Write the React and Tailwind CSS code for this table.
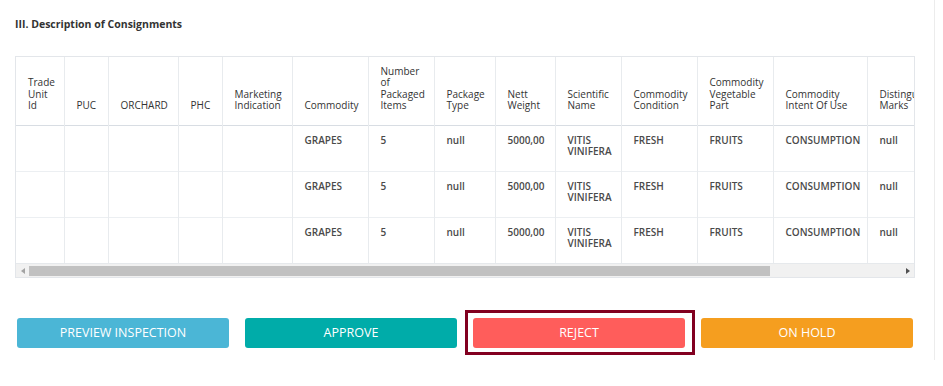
import React from 'react';

const columns = [
  { label: 'Trade Unit Id', w: 48, lines: ['Trade', 'Unit', 'Id'] },
  { label: 'PUC', w: 44 },
  { label: 'ORCHARD', w: 70 },
  { label: 'PHC', w: 44 },
  { label: 'Marketing Indication', w: 70, lines: ['Marketing', 'Indication'] },
  { label: 'Commodity', w: 76 },
  { label: 'Number of Packaged Items', w: 66, lines: ['Number', 'of', 'Packaged', 'Items'] },
  { label: 'Package Type', w: 61, lines: ['Package', 'Type'] },
  { label: 'Nett Weight', w: 60, lines: ['Nett', 'Weight'] },
  { label: 'Scientific Name', w: 66, lines: ['Scientific', 'Name'] },
  { label: 'Commodity Condition', w: 76, lines: ['Commodity', 'Condition'] },
  { label: 'Commodity Vegetable Part', w: 76, lines: ['Commodity', 'Vegetable', 'Part'] },
  { label: 'Commodity Intent Of Use', w: 94, lines: ['Commodity', 'Intent Of Use'] },
  { label: 'Distinguishing Marks', w: 110, lines: ['Distinguishing', 'Marks'] },
];

const row = ['', '', '', '', '', 'GRAPES', '5', 'null', '5000,00', ['VITIS', 'VINIFERA'], 'FRESH', 'FRUITS', 'CONSUMPTION', 'null'];
const rows = [row, row, row];

function Cell({ value }) {
  if (Array.isArray(value)) {
    return value.map((v, i) => <div key={i}>{v}</div>);
  }
  return value;
}

function ConsignmentTable() {
  return (
    <div className="w-[900px] border border-[#e3e6ea] bg-white">
      <div className="overflow-hidden">
        <table className="table-fixed border-collapse" style={{ width: columns.reduce((s, c) => s + c.w, 0) }}>
          <colgroup>
            {columns.map((c) => (
              <col key={c.label} style={{ width: c.w }} />
            ))}
          </colgroup>
          <thead>
            <tr className="h-[68px] border-b border-[#d8dde3]">
              {columns.map((c, i) => (
                <th
                  key={c.label}
                  className={`align-bottom text-left font-normal pl-[12px] pr-1 pb-[13px] whitespace-nowrap ${i > 0 ? 'border-l border-[#e8ebee]' : ''}`}
                >
                  {(c.lines || [c.label]).map((l, j) => (
                    <div key={j}>{l}</div>
                  ))}
                </th>
              ))}
            </tr>
          </thead>
          <tbody>
            {rows.map((r, ri) => (
              <tr key={ri} className={`h-[46px] ${ri < rows.length - 1 ? 'border-b border-[#eceff2]' : ''}`}>
                {r.map((v, ci) => (
                  <td
                    key={ci}
                    className={`align-top pl-[12px] pt-[9px] font-semibold text-[#4a4a4a] whitespace-nowrap ${ci > 0 ? 'border-l border-[#e8ebee]' : ''}`}
                  >
                    <Cell value={v} />
                  </td>
                ))}
              </tr>
            ))}
          </tbody>
        </table>
      </div>

      {/* horizontal scrollbar */}
      <div className="flex h-[14px] items-center border-t border-[#e6e9ec] bg-[#f1f1f1]">
        <div className="flex w-[13px] justify-center">
          <span className="h-0 w-0 border-y-[3px] border-r-[4px] border-y-transparent border-r-[#a3a3a3]" />
        </div>
        <div className="h-[10px] w-[741px] bg-[#c1c1c1]" />
        <div className="flex-1" />
        <div className="flex w-[13px] justify-center">
          <span className="h-0 w-0 border-y-[3px] border-l-[4px] border-y-transparent border-l-[#505050]" />
        </div>
      </div>
    </div>
  );
}

export default function App() {
  return (
    <div className="bg-white text-[#333] text-[10px] leading-[11.5px]" style={{ fontFamily: '"Open Sans", "Noto Sans", sans-serif' }}>
      <div className="h-[360px] w-[935px] border-r border-[#ececec] pl-[15px] pt-[17px]">
        <h2 className="text-[10.5px] font-bold leading-[14px] text-[#333]">III. Description of Consignments</h2>

        <div className="mt-[25px]">
          <ConsignmentTable />
        </div>

        {/* Action buttons */}
        <div className="mt-[40px] flex gap-[16px] pl-[2px]">
          <button className="h-[30px] w-[212px] rounded-[3px] bg-[#4bb6d6] text-[12.5px] text-white">PREVIEW INSPECTION</button>
          <button className="h-[30px] w-[212px] rounded-[3px] bg-[#00aca9] text-[12.5px] text-white">APPROVE</button>
          <div className="relative">
            <span className="absolute -left-[8px] -right-[10px] -top-[8px] -bottom-[7px] border-[3px] border-[#820020]" />
            <button className="relative h-[30px] w-[212px] rounded-[3px] bg-[#ff5d5b] text-[12.5px] text-white">REJECT</button>
          </div>
          <button className="h-[30px] w-[212px] rounded-[3px] bg-[#f59e1f] text-[12.5px] text-white">ON HOLD</button>
        </div>
      </div>
    </div>
  );
}
